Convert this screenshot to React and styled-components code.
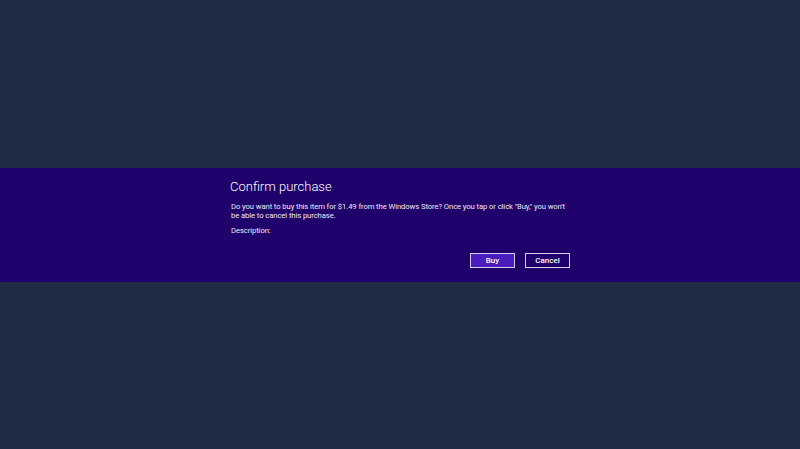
import React from "react";
import styled, { createGlobalStyle } from "styled-components";

const Global = createGlobalStyle`
  html, body { margin: 0; padding: 0; }
  body {
    background: #1d2b45;
    font-family: Roboto, "Liberation Sans", sans-serif;
  }
`;

const Page = styled.div`
  height: 449px;
  display: flex;
  flex-direction: column;
  justify-content: center;
  background: #1d2b45;
`;

const Band = styled.section`
  height: 114px;
  box-sizing: border-box;
  background: #20006a;
  display: flex;
  justify-content: center;
  padding-top: 11px;
`;

const Content = styled.div`
  width: 340px;
  display: flex;
  flex-direction: column;
`;

const Title = styled.h1`
  margin: 0;
  font-weight: 300;
  font-size: 13px;
  line-height: 16px;
  color: #ffffff;
`;

const Text = styled.p`
  margin: ${(p) => p.$mt || 0}px 0 0 1px;
  font-size: 7.7px;
  line-height: 9px;
  letter-spacing: -0.1px;
  color: #ebe9f4;
`;

const Actions = styled.div`
  display: flex;
  justify-content: flex-end;
  gap: 10px;
  margin-top: 18px;
`;

const Button = styled.button`
  width: 45px;
  height: 15px;
  box-sizing: border-box;
  border: 1px solid #d6d0ee;
  background: ${(p) => (p.$primary ? "#4a1cbf" : "#20006a")};
  color: #ffffff;
  font-family: inherit;
  font-size: 8px;
  font-weight: 500;
  padding: 0;
  line-height: 13px;
`;

export default function App() {
  return (
    <>
      <Global />
      <Page>
        <Band>
          <Content>
            <Title>Confirm purchase</Title>
            <Text $mt={7}>
              Do you want to buy this item for $1.49 from the Windows Store? Once you tap or click "Buy," you won't be able to cancel this purchase.
            </Text>
            <Text $mt={6}>Description:</Text>
            <Actions>
              <Button $primary>Buy</Button>
              <Button>Cancel</Button>
            </Actions>
          </Content>
        </Band>
      </Page>
    </>
  );
}
